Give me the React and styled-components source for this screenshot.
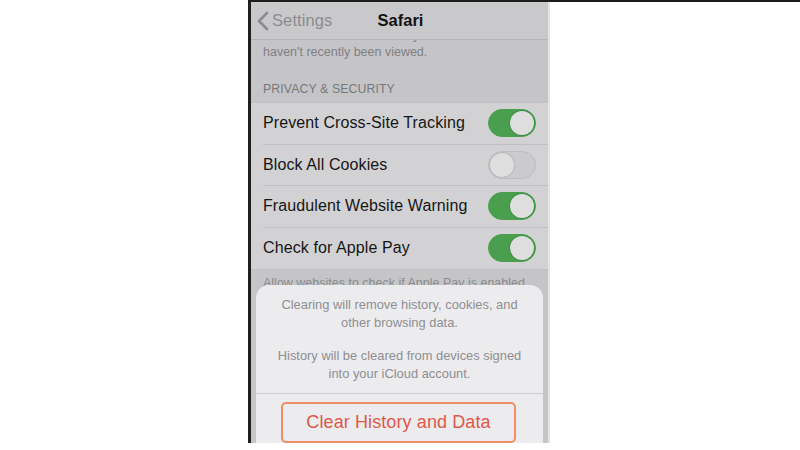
import React from "react";
import styled, { createGlobalStyle, css } from "styled-components";

const GlobalStyle = createGlobalStyle`
  html, body {
    margin: 0;
    padding: 0;
    background: #ffffff;
  }
  body {
    font-family: "Liberation Sans", Arial, sans-serif;
    -webkit-font-smoothing: antialiased;
  }
`;

const Page = styled.div`
  width: 800px;
  height: 450px;
  display: flex;
  overflow: hidden;
  background: #fff;
`;

const Gutter = styled.div`
  width: 248px;
  flex-shrink: 0;
`;

const Frame = styled.div`
  flex: 1;
  display: flex;
  align-items: flex-start;
  border-top: 2px solid #1c1c1c;
`;

const Phone = styled.div`
  position: relative;
  width: 297px;
  height: 441px;
  flex-shrink: 0;
  border-left: 3px solid #1f1f1f;
  border-right: 2px solid #e4e4e6;
  background: #c5c5c8;
  overflow: hidden;
`;

const NavBar = styled.div`
  height: 37px;
  display: flex;
  align-items: center;
  position: relative;
  background: #c9c9cb;
  border-bottom: 1px solid #b4b4b7;
  z-index: 2;
`;

const BackButton = styled.div`
  display: flex;
  align-items: center;
  gap: 3px;
  padding-left: 6px;
  font-size: 16.5px;
  color: #8b8b8f;
  letter-spacing: 0.1px;
`;

const NavTitle = styled.div`
  position: absolute;
  left: 0;
  right: 0;
  text-align: center;
  font-size: 16.5px;
  font-weight: 700;
  color: #141414;
  pointer-events: none;
  padding-left: 2px;
`;

const Content = styled.div`
  margin-top: -13px;
`;

const Note = styled.p`
  margin: 0;
  padding: 0 12px;
  font-size: 12.5px;
  line-height: 17px;
  color: #808084;
`;

const SectionHeader = styled.div`
  padding: 21px 12px 6px;
  font-size: 12.3px;
  color: #77777b;
  letter-spacing: 0.1px;
`;

const Group = styled.div`
  background: #d2d2d4;
  border-top: 1px solid #c0c0c3;
  border-bottom: 1px solid #c0c0c3;
`;

const Row = styled.div`
  height: 41px;
  box-sizing: border-box;
  display: flex;
  align-items: center;
  justify-content: space-between;
  margin-left: 12px;
  padding-right: 12px;
  ${({ divider }) =>
    divider &&
    css`
      height: 41.5px;
      border-bottom: 1px solid #bfbfc2;
    `}
`;

const RowLabel = styled.span`
  font-size: 16px;
  color: #161616;
  letter-spacing: 0.1px;
`;

const Toggle = styled.div`
  position: relative;
  width: 48px;
  height: 28px;
  border-radius: 14px;
  box-sizing: border-box;
  background: ${({ on }) => (on ? "#4a9f4e" : "#cbcbcd")};
  border: 1px solid ${({ on }) => (on ? "#4a9f4e" : "#bdbdc0")};
`;

const Knob = styled.div`
  position: absolute;
  top: 1px;
  left: ${({ on }) => (on ? "21px" : "1px")};
  width: 24px;
  height: 24px;
  border-radius: 50%;
  background: #dededf;
  box-shadow: 0 0 0 1px ${({ on }) => (on ? "#3f8f45" : "#b8b8bb")};
`;

/* only the top of the footer peeks out above the action sheet */
const Footer = styled.div`
  height: 11px;
  margin-top: 5px;
  overflow: hidden;
  padding: 0 12px;
  font-size: 12.5px;
  line-height: 17px;
  color: #8a8a8e;
  white-space: nowrap;
`;

const Sheet = styled.div`
  position: absolute;
  left: 5px;
  right: 5px;
  top: 283px;
  bottom: -20px;
  background: #ececee;
  border-radius: 13px;
  display: flex;
  flex-direction: column;
  z-index: 3;
`;

const SheetMessage = styled.div`
  padding: 11px 10px 11px;
  display: flex;
  flex-direction: column;
  gap: 16px;
  text-align: center;
  border-bottom: 1px solid #cdcdd0;
`;

const SheetText = styled.p`
  margin: 0;
  font-size: 12.9px;
  line-height: 17.5px;
  color: #8e8e92;
`;

const SheetAction = styled.div`
  padding: 8px 27px 0 25px;
`;

const DestructiveButton = styled.div`
  height: 37px;
  display: flex;
  align-items: center;
  justify-content: center;
  border: 2px solid #ef8f66;
  border-radius: 5px;
  font-size: 18px;
  color: #e0584a;
  letter-spacing: 0.1px;
`;

const Chevron = () => (
  <svg width="12" height="20" viewBox="0 0 12 20">
    <path d="M10 2 L2 10 L10 18" fill="none" stroke="#8b8b8f" strokeWidth="2.6" strokeLinecap="round" strokeLinejoin="round" />
  </svg>
);

const settings = [
  { label: "Prevent Cross-Site Tracking", on: true },
  { label: "Block All Cookies", on: false },
  { label: "Fraudulent Website Warning", on: true },
  { label: "Check for Apple Pay", on: true },
];

export default function App() {
  return (
    <>
      <GlobalStyle />
      <Page>
        <Gutter />
        <Frame>
          <Phone>
            <NavBar>
              <BackButton>
                <Chevron />
                Settings
              </BackButton>
              <NavTitle>Safari</NavTitle>
            </NavBar>
            <Content>
              <Note>
                Allow Safari to automatically close tabs that
                <br />
                haven't recently been viewed.
              </Note>
              <SectionHeader>PRIVACY &amp; SECURITY</SectionHeader>
              <Group>
                {settings.map((s, i) => (
                  <Row key={s.label} divider={i < settings.length - 1}>
                    <RowLabel>{s.label}</RowLabel>
                    <Toggle on={s.on}>
                      <Knob on={s.on} />
                    </Toggle>
                  </Row>
                ))}
              </Group>
              <Footer>Allow websites to check if Apple Pay is enabled</Footer>
            </Content>
            <Sheet>
              <SheetMessage>
                <SheetText>
                  Clearing will remove history, cookies, and
                  <br />
                  other browsing data.
                </SheetText>
                <SheetText>
                  History will be cleared from devices signed
                  <br />
                  into your iCloud account.
                </SheetText>
              </SheetMessage>
              <SheetAction>
                <DestructiveButton>Clear History and Data</DestructiveButton>
              </SheetAction>
            </Sheet>
          </Phone>
        </Frame>
      </Page>
    </>
  );
}
